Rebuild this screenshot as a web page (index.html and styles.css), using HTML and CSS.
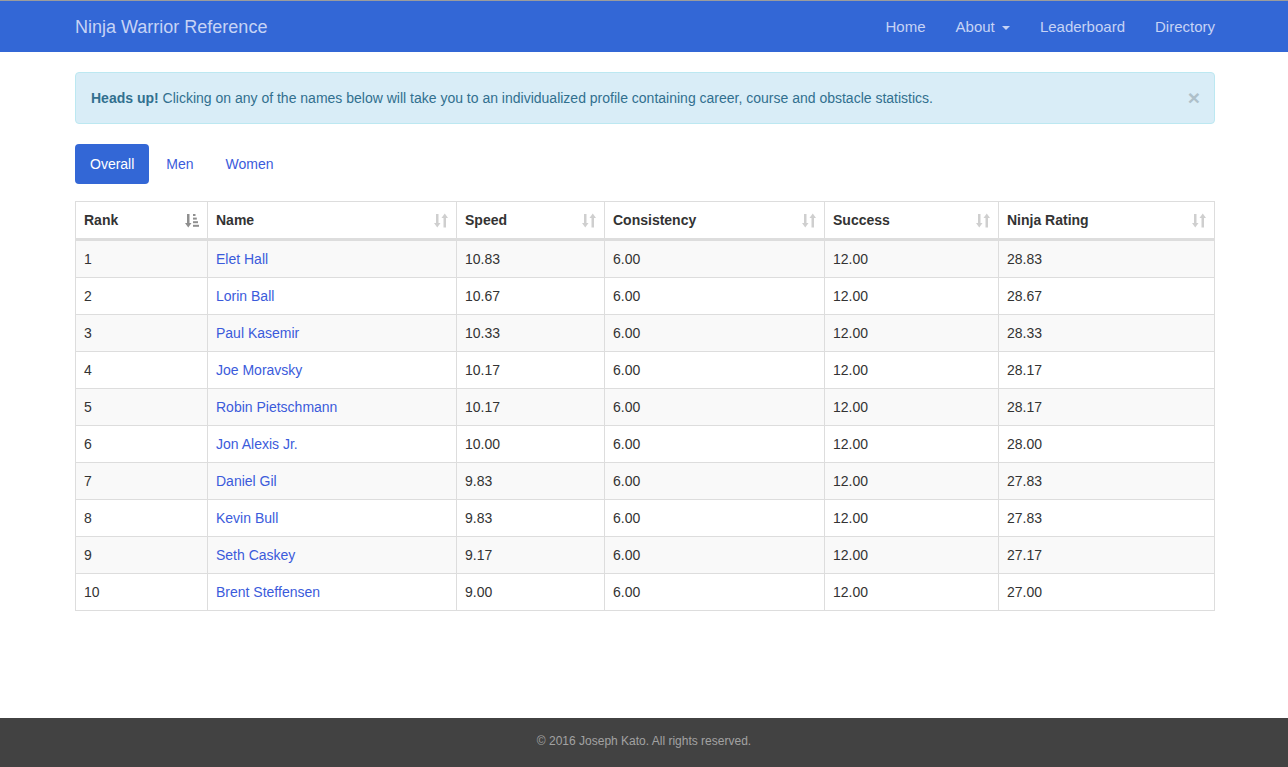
FILE: index.html
```html
<!DOCTYPE html>
<html lang="en">
<head>
<meta charset="utf-8">
<title>Ninja Warrior Reference</title>
<link rel="stylesheet" href="styles.css">
</head>
<body>
<div class="page">
  <nav class="navbar">
    <div class="container nav-inner">
      <a class="brand" href="#">Ninja Warrior Reference</a>
      <ul class="nav-links">
        <li><a href="#">Home</a></li>
        <li><a href="#">About <span class="caret"></span></a></li>
        <li><a href="#">Leaderboard</a></li>
        <li><a href="#">Directory</a></li>
      </ul>
    </div>
  </nav>

  <main class="container main">
    <div class="alert">
      <div class="alert-text"><strong>Heads up!</strong> Clicking on any of the names below will take you to an individualized profile containing career, course and obstacle statistics.</div>
      <span class="close">×</span>
    </div>

    <ul class="pills">
      <li class="active"><a href="#">Overall</a></li>
      <li><a href="#">Men</a></li>
      <li><a href="#">Women</a></li>
    </ul>

    <table class="table">
      <colgroup>
        <col class="c1"><col class="c2"><col class="c3"><col class="c4"><col class="c5"><col class="c6">
      </colgroup>
      <thead>
        <tr>
          <th><div class="th-in"><span>Rank</span>
            <svg class="sort active-sort" viewBox="0 0 14 15" width="14" height="15"><rect x="2" y="1" width="2.5" height="9.5"/><polygon points="0,10 6.5,10 3.25,14.5"/><rect x="8" y="1" width="2.5" height="2"/><rect x="8" y="4.6" width="3.8" height="2"/><rect x="8" y="8.2" width="5" height="2"/><rect x="8" y="11.8" width="6" height="2"/></svg></div></th>
          <th><div class="th-in"><span>Name</span>
            <svg class="sort" viewBox="0 0 14 15" width="14" height="15"><rect x="2" y="1" width="2.5" height="9.5"/><polygon points="0,10 6.5,10 3.25,14.5"/><polygon points="7.5,5 14,5 10.75,0.5"/><rect x="9.5" y="4.5" width="2.5" height="10"/></svg></div></th>
          <th><div class="th-in"><span>Speed</span>
            <svg class="sort" viewBox="0 0 14 15" width="14" height="15"><rect x="2" y="1" width="2.5" height="9.5"/><polygon points="0,10 6.5,10 3.25,14.5"/><polygon points="7.5,5 14,5 10.75,0.5"/><rect x="9.5" y="4.5" width="2.5" height="10"/></svg></div></th>
          <th><div class="th-in"><span>Consistency</span>
            <svg class="sort" viewBox="0 0 14 15" width="14" height="15"><rect x="2" y="1" width="2.5" height="9.5"/><polygon points="0,10 6.5,10 3.25,14.5"/><polygon points="7.5,5 14,5 10.75,0.5"/><rect x="9.5" y="4.5" width="2.5" height="10"/></svg></div></th>
          <th><div class="th-in"><span>Success</span>
            <svg class="sort" viewBox="0 0 14 15" width="14" height="15"><rect x="2" y="1" width="2.5" height="9.5"/><polygon points="0,10 6.5,10 3.25,14.5"/><polygon points="7.5,5 14,5 10.75,0.5"/><rect x="9.5" y="4.5" width="2.5" height="10"/></svg></div></th>
          <th><div class="th-in"><span>Ninja Rating</span>
            <svg class="sort" viewBox="0 0 14 15" width="14" height="15"><rect x="2" y="1" width="2.5" height="9.5"/><polygon points="0,10 6.5,10 3.25,14.5"/><polygon points="7.5,5 14,5 10.75,0.5"/><rect x="9.5" y="4.5" width="2.5" height="10"/></svg></div></th>
        </tr>
      </thead>
      <tbody>
        <tr><td>1</td><td><a href="#">Elet Hall</a></td><td>10.83</td><td>6.00</td><td>12.00</td><td>28.83</td></tr>
        <tr><td>2</td><td><a href="#">Lorin Ball</a></td><td>10.67</td><td>6.00</td><td>12.00</td><td>28.67</td></tr>
        <tr><td>3</td><td><a href="#">Paul Kasemir</a></td><td>10.33</td><td>6.00</td><td>12.00</td><td>28.33</td></tr>
        <tr><td>4</td><td><a href="#">Joe Moravsky</a></td><td>10.17</td><td>6.00</td><td>12.00</td><td>28.17</td></tr>
        <tr><td>5</td><td><a href="#">Robin Pietschmann</a></td><td>10.17</td><td>6.00</td><td>12.00</td><td>28.17</td></tr>
        <tr><td>6</td><td><a href="#">Jon Alexis Jr.</a></td><td>10.00</td><td>6.00</td><td>12.00</td><td>28.00</td></tr>
        <tr><td>7</td><td><a href="#">Daniel Gil</a></td><td>9.83</td><td>6.00</td><td>12.00</td><td>27.83</td></tr>
        <tr><td>8</td><td><a href="#">Kevin Bull</a></td><td>9.83</td><td>6.00</td><td>12.00</td><td>27.83</td></tr>
        <tr><td>9</td><td><a href="#">Seth Caskey</a></td><td>9.17</td><td>6.00</td><td>12.00</td><td>27.17</td></tr>
        <tr><td>10</td><td><a href="#">Brent Steffensen</a></td><td>9.00</td><td>6.00</td><td>12.00</td><td>27.00</td></tr>
      </tbody>
    </table>
  </main>

  <footer class="footer">© 2016 Joseph Kato. All rights reserved.</footer>
</div>
</body>
</html>
```

FILE: styles.css
```css
* { box-sizing: border-box; }
html, body { margin: 0; padding: 0; }
body {
  font-family: "Liberation Sans", Arial, Helvetica, sans-serif;
  font-size: 14px;
  line-height: 20px;
  color: #333;
  background: #fff;
}
a { text-decoration: none; }
.page {
  min-height: 100vh;
  display: flex;
  flex-direction: column;
}
.container {
  width: 1170px;
  margin: 0 auto;
  padding: 0 14px 0 16px;
}
.navbar {
  background: #3367d6;
  border-top: 1px solid #9c9c9c;
  border-bottom: 1px solid #3367d6;
  height: 52px;
  margin-bottom: 20px;
}
.nav-inner {
  display: flex;
  align-items: center;
  justify-content: space-between;
  height: 50px;
  padding-top: 2px;
}
.brand {
  font-size: 18px;
  color: #c6d3f5;
  line-height: 20px;
}
.nav-links {
  list-style: none;
  margin: 0 -15px 0 0;
  padding: 0;
  display: flex;
}
.nav-links a {
  display: block;
  padding: 15px 15px;
  font-size: 15px;
  line-height: 20px;
  color: #c6d3f5;
}
.caret {
  display: inline-block;
  width: 0;
  height: 0;
  margin-left: 3px;
  vertical-align: middle;
  border-top: 4px solid #c6d3f5;
  border-left: 4px solid transparent;
  border-right: 4px solid transparent;
}
.main { flex: 1; }
.alert {
  display: flex;
  align-items: center;
  background: #d9edf7;
  border: 1px solid #bce8f1;
  border-radius: 4px;
  color: #31708f;
  padding: 15px 14px 15px 15px;
  margin-bottom: 20px;
}
.alert strong { font-weight: bold; }
.alert-text { flex: 1; }
.close {
  font-size: 21px;
  font-weight: bold;
  line-height: 20px;
  color: #aec0c9;
}
.pills {
  list-style: none;
  margin: 0 0 17px 0;
  padding: 0;
  display: flex;
  gap: 2px;
}
.pills a {
  display: block;
  padding: 10px 15px;
  border-radius: 4px;
  color: #3b5bdb;
  line-height: 20px;
}
.pills .active a {
  background: #3367d6;
  color: #fff;
}
.table {
  width: 1139px;
  border-collapse: collapse;
  border: 1px solid #ddd;
  margin-bottom: 20px;
  table-layout: fixed;
}
.c1 { width: 132px; }
.c2 { width: 249px; }
.c3 { width: 148px; }
.c4 { width: 220px; }
.c5 { width: 174px; }
.c6 { width: 216px; }
.table th, .table td {
  border: 1px solid #ddd;
  padding: 8px;
  line-height: 20px;
  text-align: left;
  vertical-align: top;
}
.table th {
  font-weight: bold;
  border-bottom: 3px solid #ddd;
  padding-bottom: 8px;
}
.th-in {
  display: flex;
  align-items: center;
  justify-content: space-between;
}
.sort { fill: #cfcfcf; }
.sort.active-sort { fill: #8f8f8f; }
.table tbody tr:nth-child(odd) { background: #f9f9f9; }
.table td a { color: #3b5bdb; }
.footer {
  background: #424242;
  color: #a2a2a2;
  font-size: 12px;
  text-align: center;
  height: 49px;
  line-height: 47px;
}
```
